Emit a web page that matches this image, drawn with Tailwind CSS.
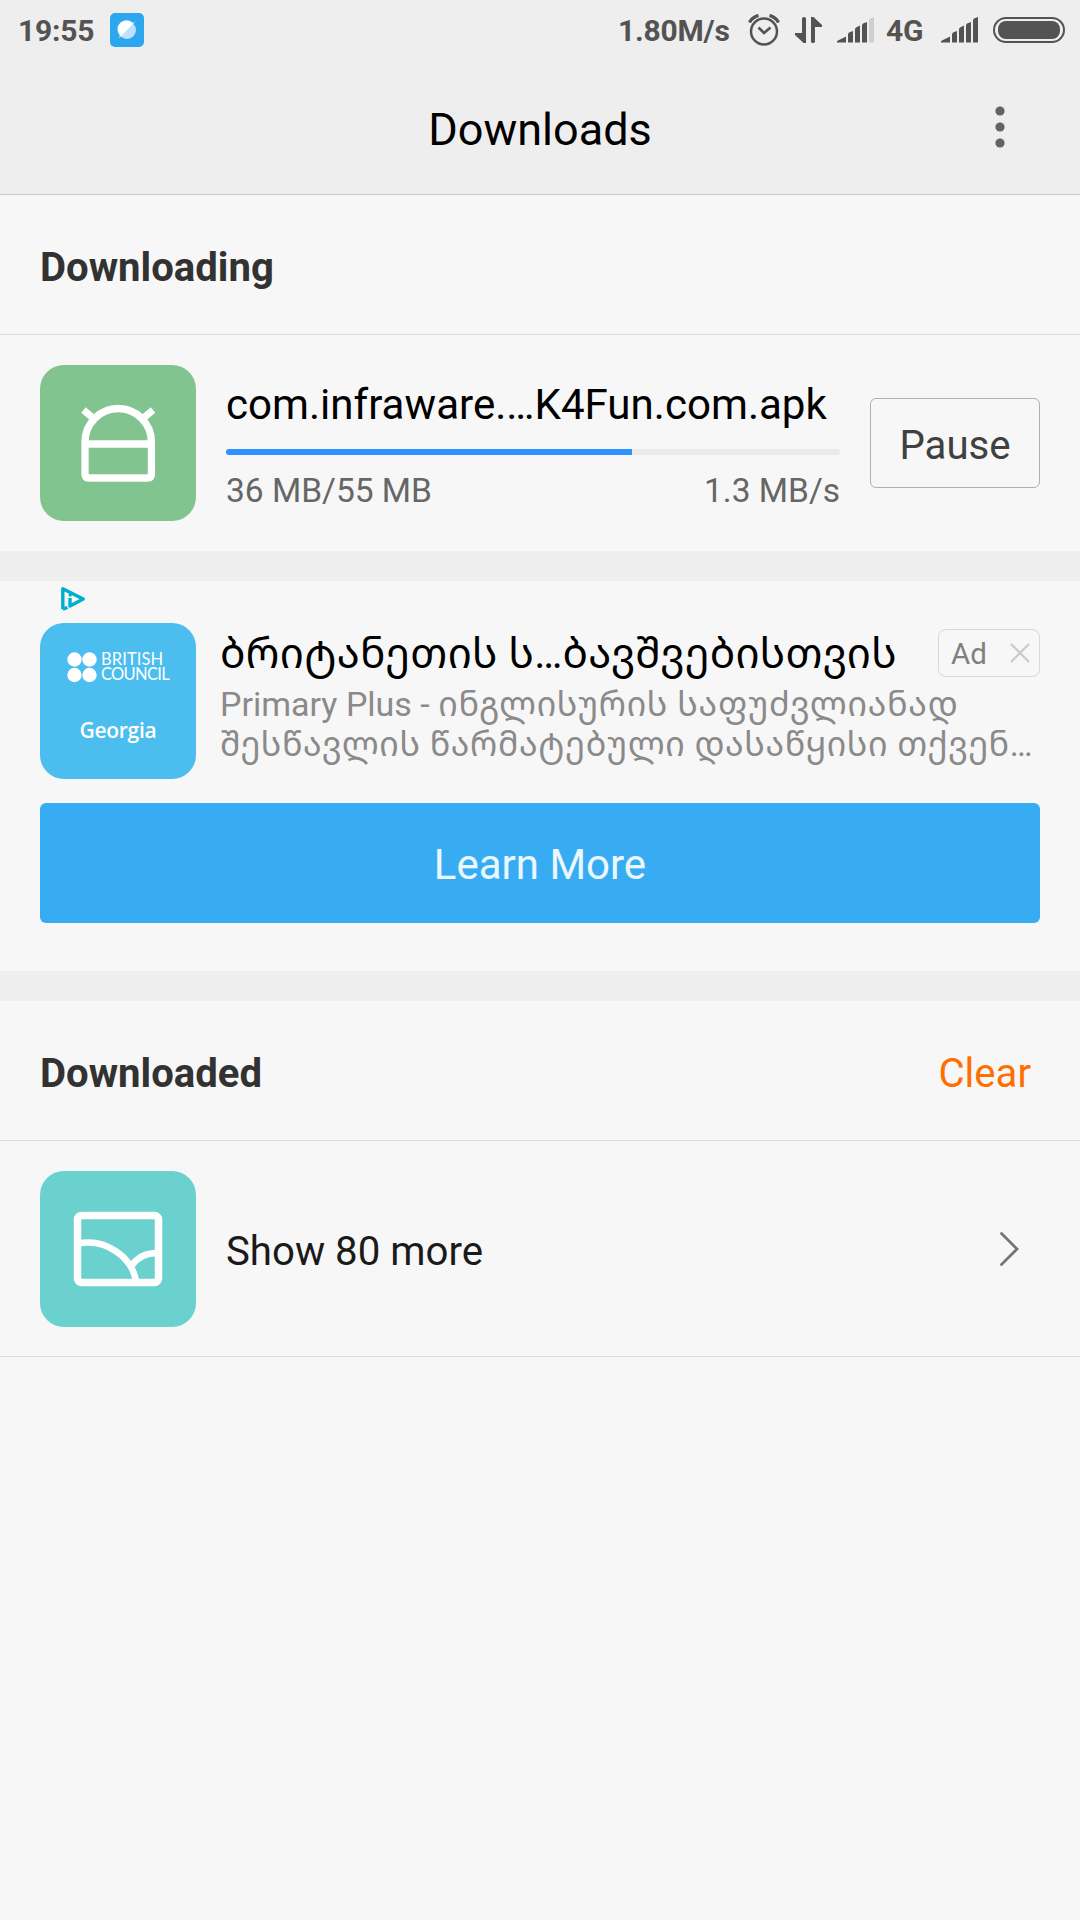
<!DOCTYPE html>
<html lang="en">
<head>
  <meta charset="UTF-8" />
  <meta name="viewport" content="width=device-width, initial-scale=1" />
  <title>Downloads</title>
  <script src="https://cdn.jsdelivr.net/npm/@tailwindcss/browser@4"></script>
</head>
<body class="bg-[#f7f7f7] min-h-screen font-['Roboto','Noto_Sans_Georgian','Noto_Sans','DejaVu_Sans',sans-serif] text-black">
  <!-- Status bar + title -->
  <header class="h-[195px] bg-[#eeeeee] border-b border-[#c8c8c8]">
    <div class="h-[60px] flex items-center pl-[18px] pr-[15px] text-[30px] font-bold tracking-[-0.2px] text-[#535353]">
      <span class="w-[92px]">19:55</span>
      <svg class="size-[34px]" viewBox="0 0 34 34">
        <rect width="34" height="34" rx="5" fill="#2ca7ef" />
        <circle cx="17" cy="17" r="9" fill="#bfe0ff" />
        <path d="M8.500 25.500L10 22.500A9 9 0 0 1 23 10L25.500 8.500Z" fill="#fff" />
      </svg>
      <span class="ml-auto w-[130px] whitespace-nowrap">1.80M/s</span>
      <svg class="w-8 h-8 mr-[15px]" viewBox="0 0 32 32" fill="none" stroke="#535353">
        <circle cx="16" cy="17.500" r="13" stroke-width="2.500" />
        <path d="M10.500 13.500L16 19L22.500 13.500" stroke-width="2.700" />
        <path d="M1.500 8.500Q4 3.500 10.500 1.500M30.500 8.500Q28 3.500 21.500 1.500" stroke-width="3.400" />
      </svg>
      <svg class="w-[28px] h-[26px] mr-[14px]" viewBox="0 0 28 26" fill="#535353">
        <path d="M7 1.500Q7 0 9 0T11 1.500V26H8.500L0 18V16H7Z" />
        <path d="M16 24.500Q16 26 18 26T20 24.500V10H27V8L18.500 0H16Z" />
      </svg>
      <svg class="w-[38px] h-[26px] mr-[11px]" viewBox="0 0 38 26" fill="#535353">
        <path d="M0 25.500V24L9 19.500V25.500ZM11 17L12 15.500L16 14V25.500H11ZM18 12L19 10.500L23 8.500V25.500H18ZM25 8L26 6.500L30 5V25.500H25Z" />
        <path d="M32 3L33 1.500L37 0V25.500H32Z" fill="#cfcfcf" />
      </svg>
      <span class="w-[55px]">4G</span>
      <svg class="w-[38px] h-[26px] mr-[14px]" viewBox="0 0 38 26" fill="#535353">
        <path d="M0 25.500V24L9 19.500V25.500ZM11 17L12 15.500L16 14V25.500H11ZM18 12L19 10.500L23 8.500V25.500H18ZM25 8L26 6.500L30 5V25.500H25ZM32 3L33 1.500L37 0V25.500H32Z" />
      </svg>
      <div class="w-[72px] h-[26px] border-2 border-[#535353] rounded-full p-[2px_3px]">
        <div class="h-[18px] w-[62px] bg-[#535353] rounded-[8px]"></div>
      </div>
    </div>
    <div class="h-[134px] grid grid-cols-[1fr_auto_1fr] items-center">
      <h1 class="col-start-2 pt-[6px] text-[45px]">Downloads</h1>
      <svg class="justify-self-end w-[10px] h-[42px] mr-[75px] -mt-[1px]" viewBox="0 0 10 42" fill="#636363">
        <circle cx="5" cy="5" r="4.600" /><circle cx="5" cy="21" r="4.600" /><circle cx="5" cy="37" r="4.600" />
      </svg>
    </div>
  </header>

  <main>
    <!-- Downloading -->
    <section>
      <h2 class="h-[140px] px-10 pt-2 flex items-center text-[40.1px] font-bold text-[#323232] border-b border-[#dcdcdc]">Downloading</h2>
      <div class="h-[216px] flex items-center px-10">
        <svg class="size-[156px] shrink-0" viewBox="0 0 156 156" fill="none" stroke="#fff">
          <rect width="156" height="156" rx="24" fill="#82c48f" stroke="none" />
          <path d="M45 77A33.200 33.500 0 0 1 111.400 77V109Q111.400 113 107.400 113H49Q45 113 45 109ZM45 79H111" stroke-width="7.300" />
          <path d="M43.500 45L53 53M113 45L103.500 53" stroke-width="7" />
        </svg>
        <div class="w-[614px] ml-[30px] pt-[5px]">
          <p class="text-[42.100px] leading-[50px] whitespace-nowrap">com.infraware.…K4Fun.com.apk</p>
          <div class="h-[6px] mt-[19px] bg-[#eaeaea] rounded-full overflow-hidden">
            <div class="h-full bg-[#2f90ff]" style="width: 66.1%"></div>
          </div>
          <div class="mt-[16px] flex justify-between text-[33.5px] leading-[40px] text-[#666]">
            <span>36 MB/55 MB</span>
            <span>1.3 MB/s</span>
          </div>
        </div>
        <button class="ml-[30px] w-[170px] h-[90px] border border-[#b0b0b0] rounded-[6px] pt-[6px] text-[40.2px] text-[#404040]">Pause</button>
      </div>
    </section>

    <!-- Sponsored card -->
    <section class="h-[450px] border-y-[30px] border-[#eeeeee] px-10 pt-[6px]">
      <svg class="w-6 h-6 ml-[21px]" viewBox="0 0 24 24">
        <path d="M1.800 22.200V1.800L22.200 12L9 19V11M1.800 22.200L6.500 20.500" fill="none" stroke="#00aecd" stroke-width="3.400" stroke-linejoin="round" />
        <circle cx="9.200" cy="8" r="1.700" fill="#00aecd" />
      </svg>
      <div class="flex mt-3">
        <div class="size-[156px] shrink-0 bg-[#4bbdef] rounded-[24px] text-white pt-[28px]">
          <div class="flex pl-[27px] gap-[4px]">
            <svg class="w-[30px] h-[32px]" viewBox="0 0 30 32" fill="#fff">
              <circle cx="7.500" cy="8.500" r="7.200" /><circle cx="22.500" cy="8.500" r="7.200" />
              <circle cx="7.500" cy="24" r="7.200" /><circle cx="22.500" cy="24" r="7.200" />
            </svg>
            <div class="font-['Lato',sans-serif] text-[16.5px] leading-[15px] pt-px">
              <p class="tracking-[0.1px]">BRITISH</p>
              <p class="tracking-[-0.7px]">COUNCIL</p>
            </div>
          </div>
          <p class="mt-[33px] text-center font-['Open_Sans',sans-serif] text-[21px] leading-[28px] font-semibold tracking-[-0.3px]">Georgia</p>
        </div>
        <div class="ml-6 flex-1 min-w-0">
          <div class="flex justify-between h-[61px]">
            <p class="text-[42px] leading-[62px] tracking-[0.3px] whitespace-nowrap">ბრიტანეთის ს…ბავშვებისთვის</p>
            <div class="mt-[6px] w-[102px] h-[48px] shrink-0 border border-[#d8d8d8] rounded-[8px] flex items-center pl-3 text-[29.5px] text-[#808080]">
              <span class="pt-[2px]">Ad</span>
              <svg class="size-5 ml-auto mr-[9px]" viewBox="0 0 20 20" stroke="#c8c8c8" stroke-width="2"><path d="M1 1L19 19M19 1L1 19" /></svg>
            </div>
          </div>
          <p class="text-[34px] leading-[40px] text-[#8a8a8a] whitespace-nowrap">Primary Plus - <span class="tracking-[0.7px]">ინგლისურის საფუძვლიანად</span><br /><span class="tracking-[0.6px]">შესწავლის წარმატებული დასაწყისი თქვენ…</span></p>
        </div>
      </div>
      <button class="mt-6 w-full h-[120px] bg-[#38acf2] rounded-[6px] pt-[2px] text-[42px] text-white/90">Learn More</button>
    </section>

    <!-- Downloaded -->
    <section>
      <div class="h-[140px] pl-10 pr-[49px] pt-2 flex items-center justify-between text-[40.1px] border-b border-[#dcdcdc]">
        <h2 class="font-bold text-[#323232]">Downloaded</h2>
        <button class="text-[#ff6e00]">Clear</button>
      </div>
      <div class="h-[216px] flex items-center pl-10 pr-[61px] border-b border-[#dcdcdc]">
        <svg class="size-[156px]" viewBox="0 0 156 156" fill="none" stroke="#fff">
          <rect width="156" height="156" rx="24" fill="#6ad1cf" stroke="none" />
          <rect x="37.500" y="44.500" width="81" height="67" rx="4" stroke-width="7.500" />
          <path d="M38 72.500C66 67 92 86 96 110M91.500 95Q100 82 117 82" stroke-width="6.500" />
        </svg>
        <span class="ml-[30px] pt-2 text-[40.2px] text-[#1a1a1a]">Show 80 more</span>
        <svg class="ml-auto w-5 h-[34px]" viewBox="0 0 20 34" fill="none" stroke="#757575" stroke-width="2.800" stroke-linecap="round"><path d="M2.500 1.500L18 17L2.500 32.500" /></svg>
      </div>
    </section>
  </main>
</body>
</html>
